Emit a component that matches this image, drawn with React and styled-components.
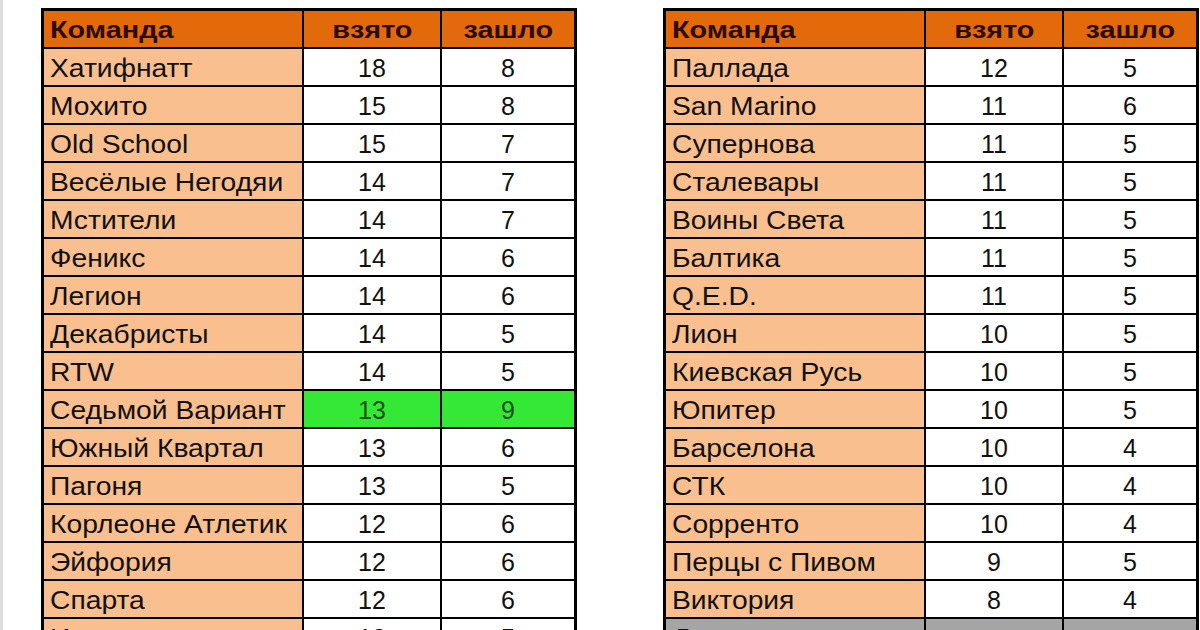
import React from "react";
import styled, { createGlobalStyle } from "styled-components";

const Global = createGlobalStyle`
  html, body { margin: 0; padding: 0; background: #ffffff; }
  body { font-family: "Liberation Sans", Arial, sans-serif; }
`;

const Page = styled.div`
  display: flex;
  height: 630px;
  width: 1200px;
  overflow: hidden;
  background: #ffffff;
`;

const LeftRule = styled.div`
  width: 3px;
  flex: none;
  background: #dedede;
`;

const Tables = styled.div`
  display: flex;
  align-items: flex-start;
  gap: 86px;
  padding: 8px 0 0 38px;
`;

const Table = styled.div`
  display: grid;
  grid-template-columns: 258px 136px 132px;
  grid-auto-rows: 36px;
  gap: 2px;
  background: #000000;
  border: 3px solid #000000;
  flex: none;
`;

const Cell = styled.div`
  display: flex;
  align-items: center;
  justify-content: ${(p) => (p.$align === "left" ? "flex-start" : "center")};
  padding: ${(p) => (p.$align === "left" ? "2px 0 0 6px" : "2px 0 0 0")};
  background: ${(p) => p.$bg};
  color: ${(p) => p.$color || "#111111"};
  font-size: ${(p) => (p.$head ? "24px" : "25px")};
  font-weight: ${(p) => (p.$head ? 700 : 400)};
  white-space: nowrap;
  overflow: hidden;
`;

const Stretch = styled.span`
  display: inline-block;
  transform: scaleX(${(p) => p.$sx || 1});
  transform-origin: ${(p) => (p.$align === "left" ? "left center" : "center center")};
`;

const ORANGE = "#e36a0a";
const PEACH = "#f9bf8f";
const WHITE = "#ffffff";
const GREEN = "#36e836";
const GRAY = "#a5a5a5";
const HEAD_INK = "#2a0c00";

const NAME_SX = 1.13;
const HEAD_SX = 1.2;

const left = [
  ["Хатифнатт", 18, 8],
  ["Мохито", 15, 8],
  ["Old School", 15, 7],
  ["Весёлые Негодяи", 14, 7],
  ["Мстители", 14, 7],
  ["Феникс", 14, 6],
  ["Легион", 14, 6],
  ["Декабристы", 14, 5],
  ["RTW", 14, 5],
  ["Седьмой Вариант", 13, 9, "green"],
  ["Южный Квартал", 13, 6],
  ["Пагоня", 13, 5],
  ["Корлеоне Атлетик", 12, 6],
  ["Эйфория", 12, 6],
  ["Спарта", 12, 6],
  ["Искра", 12, 5],
];

const right = [
  ["Паллада", 12, 5],
  ["San Marino", 11, 6],
  ["Супернова", 11, 5],
  ["Сталевары", 11, 5],
  ["Воины Света", 11, 5],
  ["Балтика", 11, 5],
  ["Q.E.D.", 11, 5],
  ["Лион", 10, 5],
  ["Киевская Русь", 10, 5],
  ["Юпитер", 10, 5],
  ["Барселона", 10, 4],
  ["СТК", 10, 4],
  ["Сорренто", 10, 4],
  ["Перцы с Пивом", 9, 5],
  ["Виктория", 8, 4],
  ["Динамо", "", "", "gray"],
];

function Score({ rows }) {
  return (
    <Table>
      <Cell $align="left" $bg={ORANGE} $head $color={HEAD_INK}>
        <Stretch $align="left" $sx={HEAD_SX}>Команда</Stretch>
      </Cell>
      <Cell $bg={ORANGE} $head $color={HEAD_INK}>
        <Stretch $sx={HEAD_SX}>взято</Stretch>
      </Cell>
      <Cell $bg={ORANGE} $head $color={HEAD_INK}>
        <Stretch $sx={HEAD_SX}>зашло</Stretch>
      </Cell>
      {rows.map(([name, a, b, mark]) => {
        const numBg = mark === "green" ? GREEN : mark === "gray" ? GRAY : WHITE;
        const numInk = mark === "green" ? "#1d4f1d" : undefined;
        return (
          <React.Fragment key={name}>
            <Cell $align="left" $bg={mark === "gray" ? GRAY : PEACH}>
              <Stretch $align="left" $sx={NAME_SX}>{name}</Stretch>
            </Cell>
            <Cell $bg={numBg} $color={numInk}>
              <Stretch>{a}</Stretch>
            </Cell>
            <Cell $bg={numBg} $color={numInk}>
              <Stretch>{b}</Stretch>
            </Cell>
          </React.Fragment>
        );
      })}
    </Table>
  );
}

export default function App() {
  return (
    <>
      <Global />
      <Page>
        <LeftRule />
        <Tables>
          <Score rows={left} />
          <Score rows={right} />
        </Tables>
      </Page>
    </>
  );
}
